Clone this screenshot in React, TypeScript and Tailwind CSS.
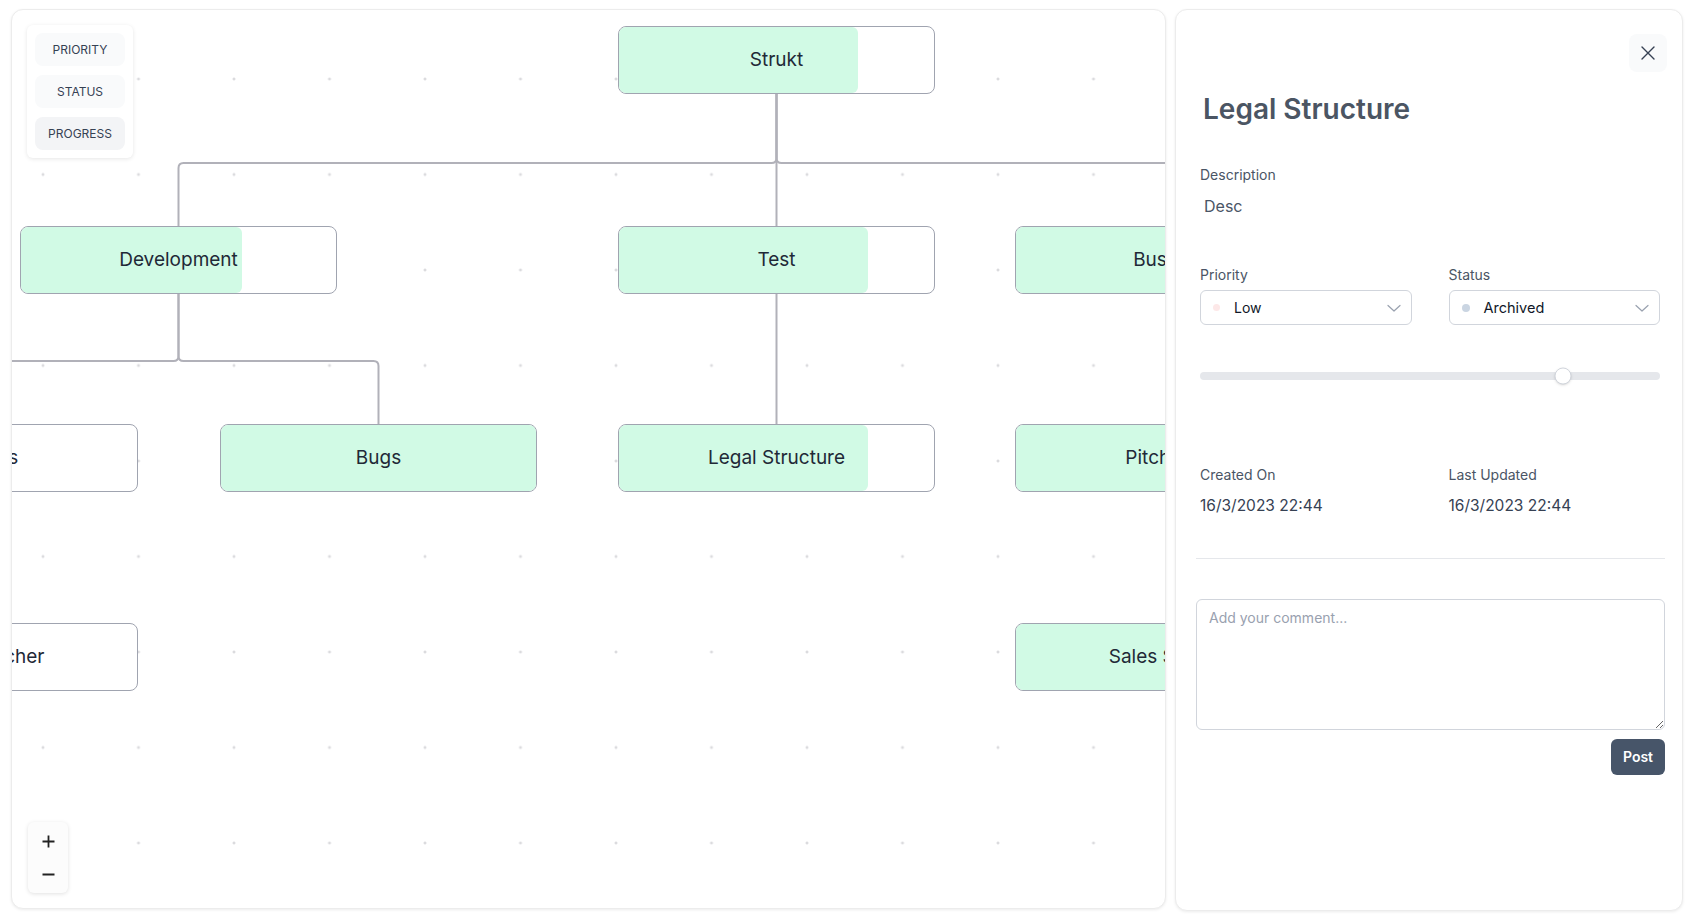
import React from "react";

type NodeData = { label: string; x: number; y: number; p: number };

const nodes: NodeData[] = [
  { label: "Strukt", x: 606, y: 16, p: 76 },
  { label: "Development", x: 8, y: 216, p: 70 },
  { label: "Test", x: 606, y: 216, p: 79 },
  { label: "Business", x: 1003, y: 216, p: 100 },
  { label: "Features", x: -191, y: 414, p: 0 },
  { label: "Bugs", x: 208, y: 414, p: 100 },
  { label: "Legal Structure", x: 606, y: 414, p: 79 },
  { label: "Pitch Deck", x: 1003, y: 414, p: 100 },
  { label: "Web Launcher", x: -191, y: 613, p: 0 },
  { label: "Sales Strategy", x: 1003, y: 613, p: 100 },
];

const edges = [
  "M764.5 84 V148 Q764.5 153 759.5 153 H171.5 Q166.5 153 166.5 158 V216",
  "M764.5 84 V148 Q764.5 153 769.5 153 H1156.5 Q1161.5 153 1161.5 158 V216",
  "M764.5 84 V216",
  "M166.5 284 V346 Q166.5 351 161.5 351 H-27.5 Q-32.5 351 -32.5 356 V414",
  "M166.5 284 V346 Q166.5 351 171.5 351 H361.5 Q366.5 351 366.5 356 V414",
  "M764.5 284 V414",
  "M1161.5 284 V414",
  "M-32.5 482 V613",
  "M1161.5 482 V613",
];

function Node({ n }: { n: NodeData }) {
  return (
    <div
      className="absolute w-[317px] h-[68px] rounded-lg border-[1.5px] border-[#a0a4b0] bg-white overflow-hidden flex items-center justify-center"
      style={{ left: n.x, top: n.y }}
    >
      {n.p > 0 && (
        <div
          className="absolute left-0 top-0 bottom-0 rounded-md bg-[#d1fae5]"
          style={{ width: `${n.p}%` }}
        />
      )}
      <span className="relative text-[19px] text-[#1f2937] whitespace-nowrap">{n.label}</span>
    </div>
  );
}

function Chevron() {
  return (
    <svg width="16" height="16" viewBox="0 0 16 16" fill="none" className="text-gray-400">
      <path d="M2 5.5 L8 11 L14 5.5" stroke="currentColor" strokeWidth="1.2" strokeLinecap="round" strokeLinejoin="round" />
    </svg>
  );
}

export default function App() {
  return (
    <div className="w-[1692px] h-[920px] bg-white flex gap-[9px] pt-[9px] pl-[11px] pr-[9px] font-['Inter',sans-serif] text-gray-700 overflow-hidden">
      {/* Canvas */}
      <div className="relative w-[1155px] h-[900px] shrink-0 rounded-xl border border-[#ececec] bg-white shadow-[0_1px_3px_rgba(0,0,0,0.08)] overflow-hidden">
        <svg className="absolute inset-0 w-full h-full" width="1155" height="900">
          <defs>
            <pattern id="dots" x={-16.75} y={21.25} width={95.5} height={95.5} patternUnits="userSpaceOnUse">
              <path d="M46.25 47.75 H49.25 M47.75 46.25 V49.25" stroke="#cfcfd4" strokeWidth="1" />
            </pattern>
          </defs>
          <rect width="100%" height="100%" fill="url(#dots)" />
          {edges.map((d, i) => (
            <path key={i} d={d} fill="none" stroke="#b1b1b9" strokeWidth="2" />
          ))}
        </svg>

        {nodes.map((n) => (
          <Node key={n.label} n={n} />
        ))}

        {/* Toolbar */}
        <div className="absolute left-[15px] top-[15px] w-[106px] rounded-md bg-white shadow-[0_1px_4px_rgba(0,0,0,0.1)] p-2 flex flex-col gap-[9px]">
          <button className="h-[33px] w-[90px] rounded-lg bg-gray-50 text-xs text-gray-700">PRIORITY</button>
          <button className="h-[33px] w-[90px] rounded-lg bg-gray-50 text-xs text-gray-700">STATUS</button>
          <button className="h-[33px] w-[90px] rounded-lg bg-gray-100 text-xs text-gray-700">PROGRESS</button>
        </div>

        {/* Zoom controls */}
        <div className="absolute left-4 bottom-[15px] w-[40px] h-[71px] rounded-md bg-[#fcfcfc] shadow-[0_1px_4px_rgba(0,0,0,0.12)] flex flex-col">
          <button className="h-[38px] flex items-center justify-center">
            <svg width="13" height="13" viewBox="0 0 13 13">
              <path d="M6.5 0.5 V12.5 M0.5 6.5 H12.5" stroke="#222" strokeWidth="1.8" />
            </svg>
          </button>
          <button className="h-[28px] flex items-center justify-center">
            <svg width="13" height="13" viewBox="0 0 13 13">
              <path d="M0.5 6.5 H12.5" stroke="#222" strokeWidth="1.8" />
            </svg>
          </button>
        </div>
      </div>

      {/* Right Panel */}
      <div className="w-[508px] h-[902px] shrink-0 rounded-xl border border-[#ececec] bg-white shadow-[0_1px_3px_rgba(0,0,0,0.08)] px-5 pt-6 flex flex-col">
        <div className="flex justify-end">
          <button className="w-[38px] h-[38px] mr-[-5px] rounded-lg bg-gray-50 flex items-center justify-center text-gray-700">
            <svg width="14" height="14" viewBox="0 0 14 14">
              <path d="M1 1 L13 13 M13 1 L1 13" stroke="currentColor" strokeWidth="1.4" strokeLinecap="round" />
            </svg>
          </button>
        </div>

        <h1 className="mt-[19px] pl-[7px] text-[28px] leading-9 font-semibold text-[#4b5563]">Legal Structure</h1>

        <div className="px-1">
          <div className="mt-[38px] text-sm text-gray-600">Description</div>
          <div className="mt-[9px] pl-1 text-base text-gray-600">Desc</div>

          <div className="mt-[47px] grid grid-cols-2 gap-x-[37px] w-[460px]">
            <div>
              <div className="text-sm text-gray-600 leading-5">Priority</div>
              <div className="mt-[5px] h-[35px] rounded-md border border-gray-300 bg-white flex items-center pl-3 pr-[9px]">
                <span className="w-[7px] h-[7px] rounded-full bg-[#fde8e8]" />
                <span className="ml-[14px] text-sm text-gray-900 flex-1">Low</span>
                <Chevron />
              </div>
            </div>
            <div>
              <div className="text-sm text-gray-600 leading-5">Status</div>
              <div className="mt-[5px] h-[35px] rounded-md border border-gray-300 bg-white flex items-center pl-3 pr-[9px]">
                <span className="w-[8px] h-[8px] rounded-full bg-slate-300" />
                <span className="ml-[14px] text-[14.5px] text-gray-900 flex-1">Archived</span>
                <Chevron />
              </div>
            </div>
          </div>

          <div className="mt-[47px] relative w-[460px] h-2 rounded-full bg-gray-200">
            <div className="absolute top-1/2 -translate-y-1/2 -translate-x-1/2 w-[17px] h-[17px] rounded-full bg-white border border-gray-300 shadow-sm" style={{ left: "79%" }} />
          </div>

          <div className="mt-[85px] grid grid-cols-2 gap-x-[37px] w-[460px]">
            <div>
              <div className="text-sm text-gray-600 leading-5">Created On</div>
              <div className="mt-[9px] text-[15.5px] text-gray-700 leading-6">16/3/2023 22:44</div>
            </div>
            <div>
              <div className="text-sm text-gray-600 leading-5">Last Updated</div>
              <div className="mt-[9px] text-[15.5px] text-gray-700 leading-6">16/3/2023 22:44</div>
            </div>
          </div>
        </div>

        <div className="mt-[40px] h-px bg-gray-200 w-[469px]" />

        <textarea
          className="mt-[40px] w-[469px] h-[131px] rounded-md border border-gray-300 px-3 py-2 text-sm text-gray-700 placeholder:text-gray-400 outline-none"
          placeholder="Add your comment..."
        />
        <div className="mt-[9px] w-[469px] flex justify-end">
          <button className="h-[36px] w-[54px] rounded-md bg-[#475569] text-white text-sm font-semibold">Post</button>
        </div>
      </div>
    </div>
  );
}
